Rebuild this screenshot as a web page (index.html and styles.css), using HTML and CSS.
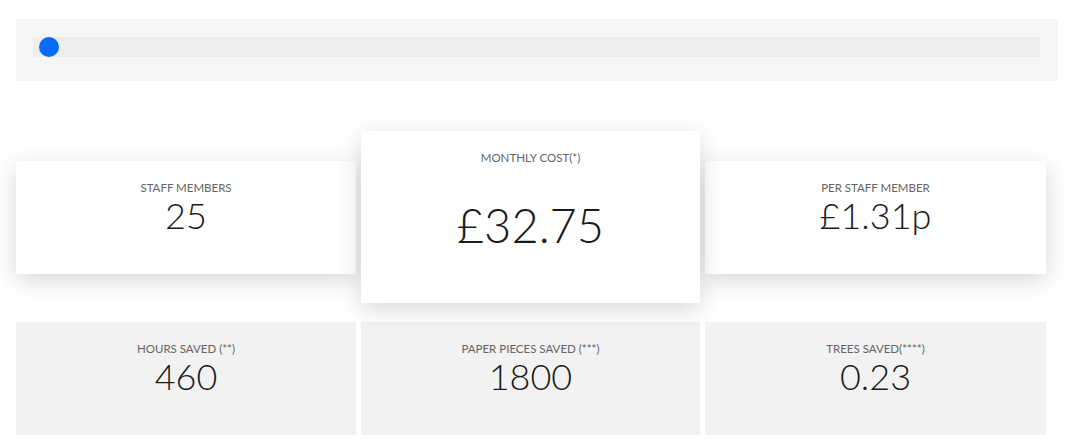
FILE: index.html
```html
<!DOCTYPE html>
<html>
<head>
<meta charset="utf-8">
<link rel="stylesheet" href="styles.css">
</head>
<body>
<div class="page">
  <div class="slider-panel">
    <div class="track">
      <div class="thumb"></div>
    </div>
  </div>
  <div class="row row-top">
    <div class="card card-white">
      <div class="label">STAFF MEMBERS</div>
      <div class="value">25</div>
    </div>
    <div class="card card-white card-main">
      <div class="label">MONTHLY COST(*)</div>
      <div class="value value-big">£32.75</div>
    </div>
    <div class="card card-white">
      <div class="label">PER STAFF MEMBER</div>
      <div class="value">£1.31p</div>
    </div>
  </div>
  <div class="row row-bottom">
    <div class="card card-grey">
      <div class="label">HOURS SAVED (**)</div>
      <div class="value">460</div>
    </div>
    <div class="card card-grey">
      <div class="label">PAPER PIECES SAVED (***)</div>
      <div class="value">1800</div>
    </div>
    <div class="card card-grey">
      <div class="label">TREES SAVED(****)</div>
      <div class="value">0.23</div>
    </div>
  </div>
</div>
</body>
</html>
```
FILE: styles.css
```css
* { box-sizing: border-box; }
html, body { margin: 0; padding: 0; background: #ffffff; }
body { font-family: Lato, "Liberation Sans", sans-serif; }
.page {
  width: 1070px;
  height: 447px;
  padding: 19px 12px 0 16px;
  overflow: hidden;
}
.slider-panel {
  width: 1042px;
  height: 62px;
  background: #f6f6f6;
  padding: 18px 18px 0 17px;
}
.track {
  position: relative;
  height: 20px;
  background: #ededed;
}
.thumb {
  position: absolute;
  left: 6px;
  top: 0;
  width: 20px;
  height: 20px;
  border-radius: 50%;
  background: #0a6cf6;
}
.row {
  display: grid;
  grid-template-columns: 340px 339px 341px;
  column-gap: 5px;
  width: 1030px;
}
.row-top {
  margin-top: 50px;
  align-items: center;
}
.row-bottom {
  margin-top: 19px;
}
.card {
  height: 113px;
  padding-top: 20px;
  text-align: center;
}
.card-white {
  background: #ffffff;
  box-shadow: 0 6px 22px rgba(0, 0, 0, 0.16);
}
.card-main {
  height: 172px;
  position: relative;
  z-index: 1;
}
.card-grey {
  background: #f2f2f2;
}
.label {
  font-size: 11.5px;
  line-height: 13px;
  color: #646464;
  font-weight: 400;
}
.value {
  font-size: 36px;
  line-height: 43px;
  font-weight: 300;
  color: #1a1a1a;
}
.value-big {
  font-size: 47px;
  margin-top: 40px;
}
```
